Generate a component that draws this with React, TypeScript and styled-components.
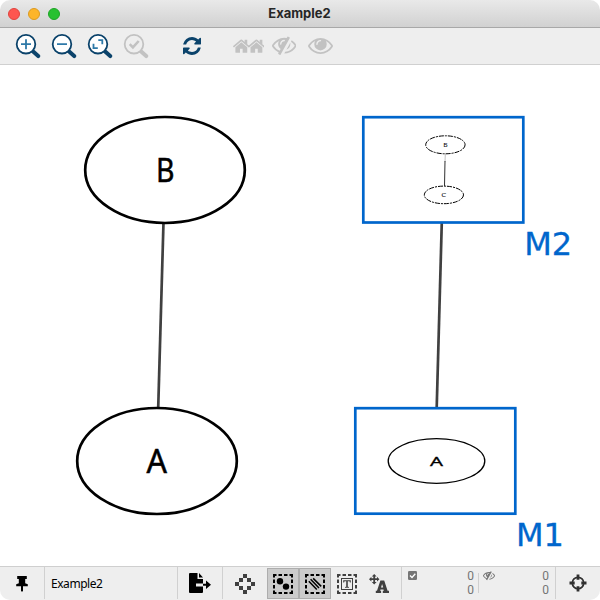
import React from "react";
import styled, { createGlobalStyle } from "styled-components";

const GlobalStyle = createGlobalStyle`
  *, *::before, *::after { box-sizing: border-box; }
  body { margin: 0; background: #fff; overflow: hidden; }
`;

const Window = styled.main`
  width: 600px;
  height: 600px;
  display: flex;
  flex-direction: column;
  border-radius: 10px;
  overflow: hidden;
  background: #fff;
  font-family: "Noto Sans", sans-serif;
`;

const TitleBar = styled.header`
  height: 28px;
  flex: none;
  display: grid;
  grid-template-columns: 68px 1fr 68px;
  align-items: center;
  background: linear-gradient(#e9e9e9, #d1d1d1);
  border-bottom: 1px solid #a8a8a8;
`;

const Lights = styled.div`
  display: flex;
  gap: 8px;
  padding-left: 8px;
`;

const Light = styled.span<{ $fill: string; $edge: string }>`
  width: 12px;
  height: 12px;
  border-radius: 50%;
  background: ${(p) => p.$fill};
  border: 1px solid ${(p) => p.$edge};
`;

const Title = styled.h1`
  margin: 0;
  padding-right: 1px;
  text-align: center;
  font: 700 13px/27px Inter, sans-serif;
  color: #262626;
`;

const Toolbar = styled.nav`
  height: 37px;
  flex: none;
  display: flex;
  align-items: center;
  padding-left: 10px;
  background: #eeeeee;
  border-bottom: 1px solid #d0d0d0;
`;

const Tool = styled.span<{ $color?: string; $gap?: number }>`
  width: 36px;
  height: 36px;
  margin-left: ${(p) => p.$gap ?? 0}px;
  display: flex;
  align-items: center;
  justify-content: center;
  color: ${(p) => p.$color ?? "#c2c2c2"};
`;

const Canvas = styled.section`
  height: 501px;
  flex: none;
  svg { display: block; }
`;

const StatusBar = styled.footer`
  height: 34px;
  flex: none;
  display: flex;
  align-items: stretch;
  padding-bottom: 1px;
  background: #eeeeee;
  border-top: 1px solid #cfcfcf;
`;

const Cell = styled.div<{ $w: number; $last?: boolean }>`
  width: ${(p) => p.$w}px;
  flex: none;
  display: flex;
  align-items: center;
  justify-content: center;
  border-right: ${(p) => (p.$last ? "0" : "1px solid #d0d0d0")};
`;

const NameCell = styled(Cell)`
  justify-content: flex-start;
  padding-left: 6px;
  font-size: 12px;
  letter-spacing: -0.45px;
  color: #000;
`;

const ModeCell = styled(Cell)`
  justify-content: flex-start;
`;

const Toggle = styled.span<{ $on?: boolean; $w?: number }>`
  width: ${(p) => p.$w ?? 32}px;
  height: 31px;
  margin-top: 1px;
  padding-top: ${(p) => (p.$w ? 0 : 1)}px;
  flex: none;
  display: flex;
  align-items: center;
  justify-content: center;
  background: ${(p) => (p.$on ? "#cbcbcb" : "transparent")};
  border: 1px solid ${(p) => (p.$on ? "#adadad" : "transparent")};
`;

const CountCell = styled(Cell)`
  justify-content: flex-start;
  align-items: flex-start;
  padding: 2px 6px 0;
`;

const Counter = styled.div<{ $w: number }>`
  width: ${(p) => p.$w}px;
  display: flex;
  justify-content: space-between;
  color: #757575;
  svg { margin-top: 2px; }
`;

const Rule = styled.span`
  width: 1px;
  height: 20px;
  margin: 4px 4px 0;
  background: #cfcfcf;
`;

const Digits = styled.div`
  font: 12px/14px Roboto, sans-serif;
  text-align: right;
`;

const REFRESH =
  "M1639 1056q0 5-1 7-64 268-268 434.5t-478 166.5q-146 0-282.5-55t-243.5-157l-129 129q-19 19-45 19t-45-19-19-45v-448q0-26 19-45t45-19h448q26 0 45 19t19 45-19 45l-137 137q71 66 161 102t187 36q134 0 250-65t186-179q11-17 53-117 8-23 30-23h192q13 0 22.5 9.5t9.5 22.5zm25-800v448q0 26-19 45t-45 19h-448q-26 0-45-19t-19-45 19-45l138-138q-148-137-349-137-134 0-250 65t-186 179q-11 17-53 117-8 23-30 23h-199q-13 0-22.5-9.5t-9.5-22.5v-7q65-268 270-434.5t480-166.5q146 0 284 55.5t245 156.5l130-129q19-19 45-19t45 19 19 45z";
const HOME =
  "M1472 992v480q0 26-19 45t-45 19h-384v-384h-256v384h-384q-26 0-45-19t-19-45v-480q0-1 .5-3t.5-3l575-474 575 474q1 2 1 6zm223-69l-62 74q-8 9-21 11h-3q-13 0-21-7l-692-577-692 577q-12 8-24 7-13-2-21-11l-62-74q-8-10-7-23.5t11-21.5l719-599q32-26 76-26t76 26l244 204v-195q0-14 9-23t23-9h192q14 0 23 9t9 23v408l219 182q10 8 11 21.5t-7 23.5z";
const EYE =
  "M1664 960q-152-236-381-353 61 104 61 225 0 185-131.5 316.5t-316.5 131.5-316.5-131.5-131.5-316.5q0-121 61-225-229 117-381 353 133 205 333.5 326.5t434.5 121.5 434.5-121.5 333.5-326.5zm-720-384q0-20-14-34t-34-14q-125 0-214.5 89.5t-89.5 214.5q0 20 14 34t34 14 34-14 14-34q0-86 61-147t147-61q20 0 34-14t14-34zm848 384q0 34-20 69-140 230-376.5 368.5t-499.5 138.5-499.5-139-376.5-368q-20-35-20-69t20-69q140-229 376.5-368t499.5-139 499.5 139 376.5 368q20 35 20 69z";
const EYE_SLASH =
  "M555 1335l78-141q-87-63-136-159t-49-203q0-121 61-225-229 117-381 353 167 258 427 375zm389-759q0-20-14-34t-34-14q-125 0-214.5 89.5t-89.5 214.5q0 20 14 34t34 14 34-14 14-34q0-86 61-147t147-61q20 0 34-14t14-34zm363-191q0 7-1 9-106 189-316 567t-315 566l-49 89q-10 16-28 16-12 0-134-70-16-10-16-28 0-12 44-87-143-65-263.5-173t-208.5-245q-20-31-20-69t20-69q153-235 380-371t496-136q89 0 180 17l54-97q10-16 28-16 5 0 18 6t31 15.5 33 18.5 31.5 18.5 19.5 11.5q16 10 16 27zm37 447q0 139-79 253.5t-209 164.5l280-502q8 45 8 84zm448 128q0 35-20 69-39 64-109 145-150 172-347.5 267t-419.5 95l74-132q212-18 392.5-137t301.5-307q-115-179-282-294l63-112q95 64 182.5 153t144.5 178q20 34 20 69z";

const Magnifier = ({ children, off }: { children: React.ReactNode; off?: boolean }) => (
  <svg width="26" height="26" viewBox="0 0 26 26" fill="none">
    <path d="M17 17.5 L23.2 23.1" stroke="currentColor" strokeWidth="4" strokeLinecap="round" />
    <circle cx="11" cy="11.2" r="9.3" fill={off ? "#eeeeee" : "#fff"} stroke="currentColor" strokeWidth="1.8" />
    {children}
  </svg>
);

const EyeSlash = ({ w }: { w: number }) => (
  <svg width={w} height={(w * 1430) / 1792} viewBox="0 247 1792 1430" fill="currentColor">
    <path d={EYE_SLASH} />
  </svg>
);

const Dashed = ({ children, color = "#000" }: { children: React.ReactNode; color?: string }) => (
  <svg width="20" height="20" viewBox="0 0 20 20" fill={color}>
    <path
      d="M1 3.5V1H3.5 M5.5 1h3.5 M11 1h3.5 M16.5 1h2.5v2.5 M19 5.5v3.5 M19 11v3.5 M19 16.5v2.5h-2.5 M14.5 19h-3.5 M9 19H5.5 M3.5 19H1v-2.5 M1 14.5v-3.5 M1 9V5.5"
      fill="none"
      stroke={color}
      strokeWidth="2"
    />
    {children}
  </svg>
);

const Diagram = () => (
  <svg width="600" height="501" viewBox="0 65 600 501" fontFamily="Noto Sans, sans-serif">
    <g stroke="#404040" strokeWidth="2.7">
      <path d="M163.5 222L158.2 408" />
      <path d="M441.8 222L436.7 408" />
    </g>
    <g fill="#fff" stroke="#000" strokeWidth="2.7">
      <ellipse cx="165" cy="170" rx="79.8" ry="53" />
      <ellipse cx="157" cy="461" rx="79.8" ry="53" />
    </g>
    <g fill="#fff" stroke="#0066cc" strokeWidth="2.7">
      <rect x="363.3" y="117.2" width="160" height="105.3" />
      <rect x="355.3" y="408.2" width="160" height="105.5" />
    </g>
    <g fill="none" stroke="#000">
      <ellipse cx="436.5" cy="461" rx="48.3" ry="22.3" strokeWidth="1.3" />
      <ellipse cx="445.4" cy="144.8" rx="19.7" ry="9" strokeWidth="1" strokeDasharray="5 1 2 1" />
      <ellipse cx="443.9" cy="194.9" rx="19.6" ry="8.8" strokeWidth="1" strokeDasharray="5 1 2 1" />
      <path d="M445.3 154L445 162" stroke="#b0b0b0" strokeWidth="0.8" />
      <path d="M445 161L444.5 186" stroke="#303030" strokeWidth="1" />
    </g>
    <g fontSize="32.5" textAnchor="middle" stroke="#000" strokeWidth="0.5">
      <text x="165.3" y="182" textLength="18.5" lengthAdjust="spacingAndGlyphs">B</text>
      <text x="156.7" y="473.2" textLength="20.5" lengthAdjust="spacingAndGlyphs">A</text>
    </g>
    <text x="430" y="465.6" fontSize="13" textLength="13" lengthAdjust="spacingAndGlyphs" stroke="#000" strokeWidth="0.3">A</text>
    <text x="443.2" y="146.8" fontSize="5.5" textLength="4.4" lengthAdjust="spacingAndGlyphs">B</text>
    <text x="441.3" y="196.8" fontSize="5.5" textLength="5" lengthAdjust="spacingAndGlyphs">C</text>
    <g fontFamily="DejaVu Sans, sans-serif" fontSize="32" fill="#0066cc" stroke="#0066cc" strokeWidth="0.3">
      <text x="524.2" y="255.3">M2</text>
      <text x="515.9" y="546.3">M1</text>
    </g>
  </svg>
);

export default function App() {
  const navy = "#0b436b";
  return (
    <>
      <GlobalStyle />
      <Window>
        <TitleBar>
          <Lights>
            <Light $fill="#fe5650" $edge="#e0443e" />
            <Light $fill="#fdb52a" $edge="#dc9a20" />
            <Light $fill="#28c131" $edge="#1ea526" />
          </Lights>
          <Title>Example2</Title>
        </TitleBar>
        <Toolbar>
          <Tool $color={navy}>
            <Magnifier>
              <path d="M6 11.2h10M11 6.2v10" stroke="#2e79a8" strokeWidth="1.8" />
            </Magnifier>
          </Tool>
          <Tool $color={navy}>
            <Magnifier>
              <path d="M6 11.2h10" stroke="#2e79a8" strokeWidth="1.8" />
            </Magnifier>
          </Tool>
          <Tool $color={navy}>
            <Magnifier>
              <path d="M11.3 7.2h4v4M6.5 10.8v4.4h4.3" stroke="#2e79a8" strokeWidth="1.8" />
            </Magnifier>
          </Tool>
          <Tool>
            <Magnifier off>
              <path d="M6.7 11.2l3.2 3.2 5.8-6.4" stroke="currentColor" strokeWidth="2.6" />
            </Magnifier>
          </Tool>
          <Tool $color={navy} $gap={20}>
            <svg width="18" height="18" viewBox="128 128 1536 1536" fill="currentColor"><path d={REFRESH} /></svg>
          </Tool>
          <Tool $gap={20}>
            <svg width="31" height="14" viewBox="0 0 31 14" fill="currentColor">
              <g transform="translate(-0.9 -2) scale(0.0103)"><path d={HOME} /></g>
              <g transform="translate(14.2 -2) scale(0.0103)"><path d={HOME} /></g>
            </svg>
          </Tool>
          <Tool><EyeSlash w={24.5} /></Tool>
          <Tool>
            <svg width="25" height="16" viewBox="0 384 1792 1152" fill="currentColor"><path d={EYE} /></svg>
          </Tool>
        </Toolbar>
        <Canvas><Diagram /></Canvas>
        <StatusBar>
          <Cell $w={45}>
            <svg width="12" height="17" viewBox="0 0 12 17"><path d="M1.2 1h9.6v3H9.2v4.2l2.6 1v2H7v4.5L6 17l-1-1.3v-4.5H.2v-2l2.6-1V4H1.2z" /></svg>
          </Cell>
          <NameCell $w={133}>Example2</NameCell>
          <Cell $w={45}>
            <svg width="22" height="20" viewBox="0 0 22 20">
              <path d="M1 0h7.5v6H14v4.5H7v3h7V19q0 1-1 1H1q-1 0-1-1V1q0-1 1-1zM10 0l4 4.6h-4z" />
              <path d="M14 10.7h3V7.5l5 4.2-5 4.3v-3.2h-3z" />
            </svg>
          </Cell>
          <ModeCell $w={179}>
            <Toggle $w={44}>
              <svg width="20" height="20" viewBox="0 0 20 20" fill="#404040" shapeRendering="crispEdges">
                <path d="M8 0h4v4H8zM4 4h4v4H4zM12 4h4v4h-4zM0 8h4v4H0zM16 8h4v4h-4zM4 12h4v4H4zM12 12h4v4h-4zM8 16h4v4H8z" />
              </svg>
            </Toggle>
            <Toggle $on>
              <Dashed>
                <circle cx="7" cy="7.3" r="3.2" />
                <circle cx="13" cy="12.6" r="3.2" />
              </Dashed>
            </Toggle>
            <Toggle $on>
              <Dashed>
                <path d="M3.8 7.2L11.8 15.6M5.6 5.2L14 14M8.2 4.4L16.2 12.4" stroke="#000" strokeWidth="1.5" />
              </Dashed>
            </Toggle>
            <Toggle>
              <Dashed color="#404040">
                <rect x="4.5" y="4.5" width="11" height="11" fill="none" stroke="#404040" />
                <path d="M6.2 6.2h7.6v2.4h-.9l-.4-1.3h-1.7v5.4l1.2.3v.8H8v-.8l1.2-.3V7.3H7.5l-.4 1.3h-.9z" />
              </Dashed>
            </Toggle>
            <Toggle>
              <svg width="20" height="20" viewBox="0 0 20 20" fill="#404040">
                <path d="M5.2 0l2.4 2.4H6.1v1.9H8V2.8l2.4 2.4L8 7.6V6.1H6.1V8h1.5l-2.4 2.4L2.8 8h1.5V6.1H2.4v1.5L0 5.2l2.4-2.4v1.5h1.9V2.4H2.8z" />
                <path fillRule="evenodd" d="M11.4 6.4h3.8l3.4 10.4H20V19h-6.2v-2.2h1.1l-.4-1.3h-3l-.4 1.3h1V19H6.8v-2.2H8zM13.1 10L12 13.4h2.2z" />
              </svg>
            </Toggle>
          </ModeCell>
          <CountCell $w={154}>
            <Counter $w={66}>
              <svg width="9" height="9" viewBox="0 0 9 9">
                <rect width="9" height="9" rx="1.3" fill="#757575" />
                <path d="M2 4.5l2 2 3.3-3.8" fill="none" stroke="#fff" strokeWidth="1.3" />
              </svg>
              <Digits><div>0</div><div>0</div></Digits>
            </Counter>
            <Rule />
            <Counter $w={66}>
              <EyeSlash w={12} />
              <Digits><div>0</div><div>0</div></Digits>
            </Counter>
          </CountCell>
          <Cell $w={44} $last>
            <svg width="18" height="18" viewBox="0 0 18 18" fill="none" stroke="#303030">
              <circle cx="9" cy="9" r="5.7" strokeWidth="1.7" />
              <path d="M9 .5v5.2M9 12.3v5.2M.5 9h5.2M12.3 9h5.2" strokeWidth="2.8" />
            </svg>
          </Cell>
        </StatusBar>
      </Window>
    </>
  );
}
